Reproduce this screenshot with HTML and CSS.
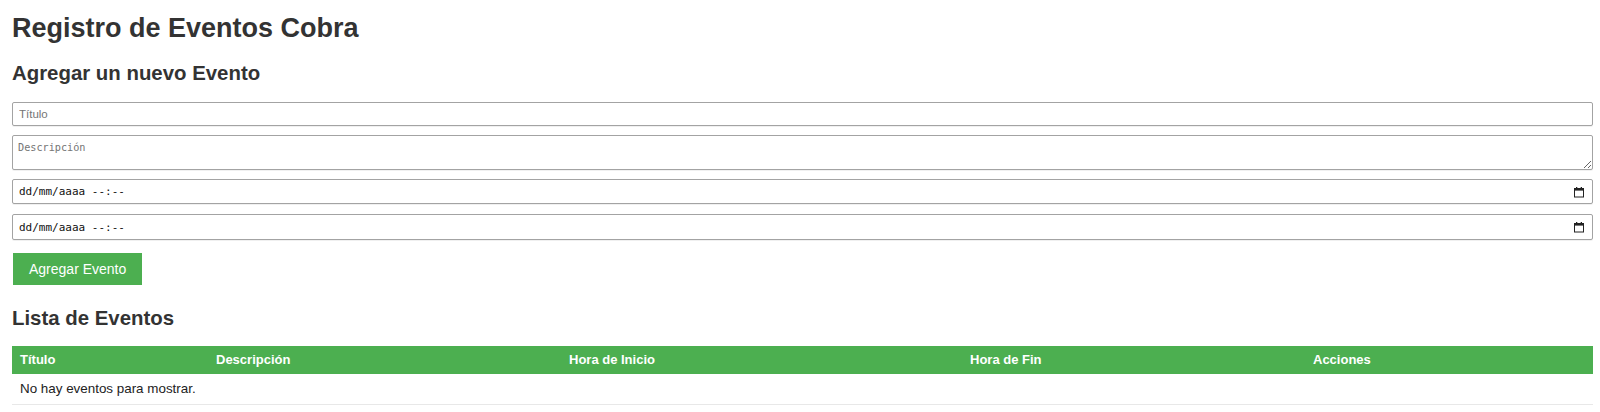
FILE: index.html
```html
<!DOCTYPE html>
<html lang="es">
<head>
<meta charset="utf-8">
<title>Registro de Eventos Cobra</title>
<link rel="stylesheet" href="styles.css">
</head>
<body>
<main class="page">
  <h1 class="title">Registro de Eventos Cobra</h1>
  <h2 class="section-title">Agregar un nuevo Evento</h2>
  <form class="event-form">
    <input class="field field-text" type="text" placeholder="Título">
    <textarea class="field field-area" placeholder="Descripción"></textarea>
    <div class="field field-date">
      <span class="date-text">dd/mm/aaaa --:--</span>
      <svg class="cal-icon" width="12" height="12" viewBox="0 0 12 12" aria-hidden="true">
        <rect x="1.5" y="2.5" width="9" height="8.5" fill="none" stroke="#222" stroke-width="1"/>
        <rect x="1" y="2" width="10" height="2.6" fill="#222"/>
        <rect x="3" y="1" width="1.3" height="2" fill="#222"/>
        <rect x="7.7" y="1" width="1.3" height="2" fill="#222"/>
      </svg>
    </div>
    <div class="field field-date field-date-2">
      <span class="date-text">dd/mm/aaaa --:--</span>
      <svg class="cal-icon" width="12" height="12" viewBox="0 0 12 12" aria-hidden="true">
        <rect x="1.5" y="2.5" width="9" height="8.5" fill="none" stroke="#222" stroke-width="1"/>
        <rect x="1" y="2" width="10" height="2.6" fill="#222"/>
        <rect x="3" y="1" width="1.3" height="2" fill="#222"/>
        <rect x="7.7" y="1" width="1.3" height="2" fill="#222"/>
      </svg>
    </div>
    <button class="btn-add" type="button">Agregar Evento</button>
  </form>
  <h2 class="section-title list-title">Lista de Eventos</h2>
  <table class="events">
    <colgroup>
      <col class="c1"><col class="c2"><col class="c3"><col class="c4"><col class="c5">
    </colgroup>
    <thead>
      <tr><th>Título</th><th>Descripción</th><th>Hora de Inicio</th><th>Hora de Fin</th><th>Acciones</th></tr>
    </thead>
    <tbody>
      <tr><td colspan="5">No hay eventos para mostrar.</td></tr>
    </tbody>
  </table>
</main>
</body>
</html>
```
FILE: styles.css
```css
html, body {
  margin: 0;
  padding: 0;
  background: #fff;
}
body {
  font-family: "Liberation Sans", Arial, sans-serif;
  color: #333;
}
.page {
  margin: 0 7px 0 12px;
  padding-top: 12px;
}
.title {
  margin: 0;
  font-size: 27px;
  line-height: 32px;
  font-weight: bold;
  color: #333;
}
.section-title {
  margin: 17px 0 0 0;
  font-size: 20.4px;
  line-height: 24px;
  font-weight: bold;
  color: #333;
}
.event-form {
  display: flex;
  flex-direction: column;
  align-items: stretch;
  gap: 9px;
  margin-top: 17px;
}
.field {
  box-sizing: border-box;
  width: 100%;
  margin: 0;
  border: 1px solid #a3a3a3;
  border-radius: 2px;
  background: #fff;
  box-shadow: 0 1px 0 rgba(0,0,0,0.06);
}
.field-text {
  height: 24px;
  padding: 0 6px;
  font-family: "Liberation Sans", Arial, sans-serif;
  font-size: 11.5px;
  color: #333;
  outline: none;
}
.field-text::placeholder {
  color: #757575;
}
.field-area {
  height: 35px;
  padding: 5px 5px;
  font-family: "DejaVu Sans Mono", monospace;
  font-size: 10.2px;
  line-height: 13px;
  resize: vertical;
  outline: none;
}
.field-area::placeholder {
  color: #757575;
}
.field-date {
  height: 25px;
  display: flex;
  align-items: center;
  justify-content: space-between;
  padding: 0 7px 0 6px;
}
.field-date-2 {
  height: 26px;
  margin-top: 1px;
}
.date-text {
  font-family: "DejaVu Sans Mono", monospace;
  font-size: 11px;
  color: #111;
  white-space: pre;
}
.cal-icon {
  display: block;
}
.btn-add {
  align-self: flex-start;
  margin: 4px 0 0 1px;
  padding: 8px 16px;
  border: none;
  background: #4caf50;
  color: #fff;
  font-family: "Liberation Sans", Arial, sans-serif;
  font-size: 14px;
  line-height: 16px;
  cursor: pointer;
}
.list-title {
  margin-top: 21px;
}
.events {
  width: 100%;
  margin-top: 16px;
  border-collapse: collapse;
  table-layout: fixed;
}
.events .c1 { width: 196px; }
.events .c2 { width: 353px; }
.events .c3 { width: 401px; }
.events .c4 { width: 343px; }
.events .c5 { width: 288px; }
.events th {
  background: #4caf50;
  color: #fff;
  text-align: left;
  font-size: 13px;
  line-height: 16px;
  font-weight: bold;
  padding: 6px 8px;
}
.events td {
  font-size: 13.4px;
  line-height: 16px;
  padding: 7px 8px;
  color: #222;
  border-bottom: 1px solid #e8e8e8;
}
```
